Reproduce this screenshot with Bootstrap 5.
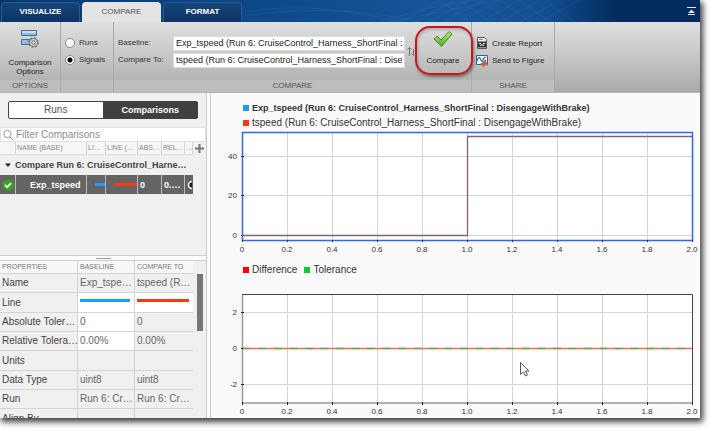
<!DOCTYPE html>
<html lang="en">
<head>
<meta charset="utf-8">
<meta name="viewport" content="width=device-width, initial-scale=1">
<title>Simulation Data Inspector</title>
<link rel="stylesheet" href="https://cdn.jsdelivr.net/npm/bootstrap@5.3.0/dist/css/bootstrap.min.css">
<style>
body{font-family:"Liberation Sans",Arial,sans-serif;font-size:9px;line-height:12px;color:#333;background:#fff;padding:0 15px 15px 0}
.app{background:#fafafa;box-shadow:2px 3px 6px 1px rgba(0,0,0,.75)}
.tabs{height:22px;background:linear-gradient(90deg,#06366e,#0d4888 35%,#165699 65%,#124f90 78%,#022c5e 88%,#022c5e);padding-left:1px}
.tabs .decor{position:absolute;inset:0;width:100%;height:100%}
.tabs .nav{gap:2px}
.tabs .nav-link{width:79px;height:20px;padding:0;font-size:8px;line-height:18px;text-align:center;color:#fff;font-weight:bold;border-radius:4px 4px 0 0;background:linear-gradient(#164478,#0d3566);border:1px solid #2a5a92;border-bottom:0}
.tabs .nav-link.active{color:#555;background:#e4e4e4;border-color:#e4e4e4;font-weight:normal}
.strip{height:71px;font-size:8px;background:linear-gradient(#dfdfdf,#c9c9c9 45%,#a9a9a9);border-bottom:1px solid #b4b4b4}
.group{border-right:1px solid #aaa}
.group-options{width:61px}
.group-mode{width:53px}
.group-compare{width:358px}
.group-share{width:83px}
.group-title{height:12px;line-height:12px;color:#555;text-align:center;background:#bdbdbd}
.strip .btn{font-size:8px;line-height:9px;color:#222;border:0;border-radius:0;padding:0}
.strip .btn:hover{background:#fff5}
.rows{padding:13px 4px 0;gap:1px}
.rows>div,.rows>.btn{height:16px}
.strip .form-check-input{width:10px;height:10px;margin:0;border:1px solid #888;background-color:#fff}
.strip .form-check-input:checked{background-image:radial-gradient(circle,#000 0 2px,#fff 3px)}
.row-label{width:55px}
.signal-box{height:15px;min-height:0;font-size:9px;line-height:12px;padding:0 2px;border:1px solid #ddd;border-radius:0;color:#222;background:#fff}
.swap-cell{width:10px}
.compare-btn{width:56px}
.callout{position:absolute;inset:4px -2px 5px 0;border:2px solid #c8161d;border-radius:15px;box-shadow:1px 2px 3px #0006,inset 1px 2px 3px #0003;pointer-events:none}
.side{width:206px;background:#f0f0f0}
.gutter{width:5px;background:#fbfbfb;border-left:1px solid #ccc;border-right:1px solid #ccc}
.seg{margin:8px 8px 8px}
.seg .btn{font-size:10px;line-height:14px;padding:0;height:18px;border-radius:2px;border:1px solid #444;background:#fff;color:#555}
.seg .btn.active{font-size:9px;background:#404040;border-color:#404040;color:#fff;font-weight:bold}
.search{height:15px;gap:2px;padding-left:2px;background:#fff;border:1px solid #e2e2e2}
.search input{height:13px;min-height:0;font-size:10px;line-height:13px;padding:0;border:0;background:none;border-radius:0}
.search input::placeholder{color:#8c8c8c}
.runs,.props{width:193px;table-layout:fixed;border-collapse:separate;border-spacing:0}
.runs th,.runs td,.props th,.props td{padding:0 0 0 2px;white-space:nowrap;vertical-align:middle}
.runs thead th{height:13px;padding-left:1px;font-size:7px;line-height:12px;font-weight:normal;color:#888;border-right:1px solid #d4d4d4;border-bottom:1px solid #ddd;background:#f6f6f6}
.runs .summary th{height:20px;padding-left:5px;color:#444}
.runs .picked td{height:19px;background:#646464;color:#fff;border-right:1px solid #bbb}
.runs .picked .sig-name{padding-left:14px;font-weight:bold}
.runs .picked .key-cell{padding:0 0 0 8px}
.runs .picked td:last-child{padding:0;border:0}
.add-col{width:13px;height:12px}
.line-key{height:3px}
.props .line-key{margin:0 4px 4px 0}
.blue{background:#1c9cff}.orange{background:#ff3812}.red{background:#f00}.green{background:#0c3}
.grip{height:6px;background:#fbfbfb;border-top:1px solid #ccc;border-bottom:1px solid #ccc}
.grip span{width:15px;height:1px;background:#999}
.detail{height:157px}
.props th,.props td{font-size:10px;border-right:1px solid #d4d4d4;border-bottom:1px solid #d4d4d4;font-weight:normal;height:19px;color:#666}
.props tbody th{color:#444}
.props thead th{height:13px;font-size:7px;line-height:12px;background:#f7f7f7;color:#777}
.props tr>:last-child{border-right:0}
.props tbody tr:nth-child(3n+2)>*{height:20px}
.props .editable{background:#fff}
.thumb{width:6px;height:57px;margin:13px 0 0 4px;background:#777}
.plots{padding-top:7px}
.legend-row{padding-left:32px;gap:3px;height:15px;font-size:10px}
.legend-row.fw-bold{font-size:9px}
.legend-pair{height:30px}
.legend-key{width:6px;height:6px}
.plot{display:block;width:100%;height:auto}
.plot text{font-size:8px;fill:#333}
</style>
<script src="https://cdn.jsdelivr.net/npm/bootstrap@5.3.0/dist/js/bootstrap.bundle.min.js"></script>
</head>
<body class="vh-100 overflow-hidden">
<div class="app d-flex flex-column h-100">
  <header class="tabs position-relative d-flex align-items-end justify-content-between flex-shrink-0">
    <svg class="decor" viewBox="0 0 700 22" preserveAspectRatio="none" fill="none" stroke="#5c9bd2" stroke-opacity=".22" stroke-width=".6"><path d="M380 22Q430 5 480 0M390 22Q450 10 500 0M400 22L440 0M415 22L455 0M430 22L470 0M445 22L485 0M460 22L500 0M480 22L520 0M500 22L540 0M520 22L560 0M540 22L580 0M440 0L470 22M460 0L490 22M480 0L510 22M500 0L530 22M520 0L550 22M545 0L575 22M245 12Q310 0 400 22M245 16Q330 2 420 22"/></svg>
    <nav class="nav position-relative flex-nowrap" aria-label="Toolstrip">
      <a class="nav-link" href="#">VISUALIZE</a>
      <a class="nav-link active" href="#" aria-current="page">COMPARE</a>
      <a class="nav-link" href="#">FORMAT</a>
    </nav>
    <button class="btn p-0 border-0 d-flex position-relative align-self-center me-1" aria-label="Minimize toolstrip"><svg width="10" height="10" viewBox="0 0 10 10"><path d="M1 1h9v1H1zM5.500 3.500L9 7H2zM2 8h7v1H2z" fill="#dde9f5"/></svg></button>
  </header>

  <div class="strip d-flex flex-shrink-0">
    <section class="group group-options d-flex flex-column">
      <button class="btn flex-fill d-flex flex-column align-items-center pt-2">
        <svg width="20" height="20" viewBox="0 0 20 20"><g fill="#8dbde6" stroke="#49718f"><path d="M1.500 .5h15v5h-15zM1.500 9.500h9v5h-9z"/></g><path d="M2 1h14v2H2z" fill="#c5def3"/><circle cx="13.500" cy="12.500" r="4.300" fill="none" stroke="#555" stroke-width="2" stroke-dasharray="1.700 1.680"/><circle cx="13.500" cy="12.500" r="4" fill="#d8d8d8" stroke="#666" stroke-width=".7"/><circle cx="13.500" cy="12.500" r="1.700" fill="#fff" stroke="#555"/></svg>
        <span class="mt-2">Comparison<br>Options</span>
      </button>
      <div class="group-title">OPTIONS</div>
    </section>
    <section class="group group-mode d-flex flex-column">
      <div class="rows flex-fill d-flex flex-column">
        <div class="d-flex align-items-center"><input class="form-check-input flex-shrink-0" type="radio" name="mode" id="m-runs"><label class="ps-1" for="m-runs">Runs</label></div>
        <div class="d-flex align-items-center"><input class="form-check-input flex-shrink-0" type="radio" name="mode" id="m-signals" checked><label class="ps-1" for="m-signals">Signals</label></div>
      </div>
      <div class="group-title"></div>
    </section>
    <section class="group group-compare d-flex flex-column">
      <div class="flex-fill d-flex">
        <div class="rows pe-0 flex-fill d-flex flex-column">
          <div class="d-flex align-items-center"><label class="row-label flex-shrink-0" for="s-base">Baseline:</label><input class="signal-box form-control" id="s-base" value="Exp_tspeed (Run 6: CruiseControl_Harness_ShortFinal : DisengageWithBrake)"></div>
          <div class="d-flex align-items-center"><label class="row-label flex-shrink-0" for="s-to">Compare To:</label><input class="signal-box form-control" id="s-to" value="tspeed (Run 6: CruiseControl_Harness_ShortFinal : DisengageWithBrake)"></div>
        </div>
        <button class="btn swap-cell d-flex align-items-center justify-content-end" aria-label="Swap signals"><svg width="8" height="11" viewBox="0 0 8 11" fill="none" stroke="#777"><path d="M2.500 10V1.500M.5 3.500l2-2 2 2M6.500 3v6.500M4.500 7.500l2 2"/></svg></button>
        <button class="btn compare-btn position-relative d-flex flex-column align-items-center flex-shrink-0">
          <span class="callout"></span>
          <svg class="mt-2 mb-2" width="22" height="18" viewBox="0 0 22 18"><defs><linearGradient id="tick" x2="0" y2="1"><stop stop-color="#b6ef72"/><stop offset="1" stop-color="#4aa81e"/></linearGradient></defs><path d="M2 9l3-3 4 4 8-8.500 3 2.500L9.500 16.500z" fill="url(#tick)" stroke="#4c8a2c" stroke-linejoin="round"/></svg>
          <span>Compare</span>
        </button>
      </div>
      <div class="group-title">COMPARE</div>
    </section>
    <section class="group group-share d-flex flex-column">
      <div class="rows flex-fill d-flex flex-column align-items-start">
        <button class="btn d-flex align-items-center gap-1"><svg width="12" height="14" viewBox="0 0 12 14"><path d="M1.500 1.500h7l2 2v9h-9z" fill="#eee" stroke="#555"/><path d="M3 3.500h4" stroke="#888"/><path d="M2 5.500h8v6H2z" fill="#333"/><path d="M3 7.500h2m2 0h2M4 9.500q2-1.500 4 0" stroke="#fff" fill="none"/></svg>Create Report</button>
        <button class="btn d-flex align-items-center gap-1"><svg width="12" height="13" viewBox="0 0 12 13"><path d="M.5 1.500h11v9H.5z" fill="#fff" stroke="#2f5f94"/><path d="M1 7Q3 1 4.500 5T7 6t3-3" fill="none" stroke="#2869a8" stroke-width="1.200"/><path d="M4.500 9.500l2-1L9.500 5l2.500 7-2-1-2.500 2z" fill="#dc5a28"/><path d="M4.500 9.500l2-1 1-1 .5 3z" fill="#4b8fc4"/></svg>Send to Figure</button>
      </div>
      <div class="group-title">SHARE</div>
    </section>
  </div>

  <main class="d-flex flex-fill overflow-hidden">
    <aside class="side d-flex flex-column flex-shrink-0">
      <div class="seg btn-group" role="group" aria-label="View">
        <button class="btn w-50">Runs</button>
        <button class="btn w-50 active">Comparisons</button>
      </div>
      <div class="search d-flex align-items-center">
        <svg class="flex-shrink-0" width="11" height="12" viewBox="0 0 11 12" fill="none" stroke="#999"><circle cx="4.500" cy="5" r="3.700"/><path d="M7 8l3.500 3.500"/></svg>
        <input class="form-control" type="search" placeholder="Filter Comparisons" aria-label="Filter Comparisons">
      </div>
      <div class="d-flex flex-fill align-items-start">
        <table class="runs">
          <colgroup><col width="16"><col width="71"><col width="19"><col width="32"><col width="24"><col width="23"><col width="8"></colgroup>
          <thead><tr><th></th><th>NAME (BASE)</th><th>LI…</th><th>LINE (…</th><th>ABS…</th><th>REL…</th><th>…</th></tr></thead>
          <tbody>
            <tr class="summary"><th colspan="7"><svg class="me-1" width="6" height="5" viewBox="0 0 6 5"><path d="M0 .5h6L3 4z" fill="#222"/></svg>Compare Run 6: CruiseControl_Harne…</th></tr>
            <tr class="picked"><td><svg class="d-block" width="12" height="12" viewBox="0 0 12 12"><circle cx="6" cy="6" r="5.700" fill="#37a31c"/><path d="M3 6l2.200 2.200L9 4" fill="none" stroke="#fff" stroke-width="1.800"/></svg></td><td class="sig-name">Exp_tspeed</td><td class="key-cell"><div class="line-key blue"></div></td><td class="key-cell"><div class="line-key orange"></div></td><td><b>0</b></td><td><b>0.…</b></td><td><svg class="d-block" width="7" height="10" viewBox="0 0 7 10"><circle cx="7" cy="5" r="3.500" fill="#222" stroke="#fff" stroke-width="1.500"/></svg></td></tr>
          </tbody>
        </table>
        <button class="btn p-0 border-0 add-col d-flex align-items-center justify-content-center" aria-label="Add column"><svg width="9" height="9" viewBox="0 0 9 9"><path d="M4.500 0v9M0 4.500h9" stroke="#777" stroke-width="2"/></svg></button>
      </div>
      <div class="grip d-flex align-items-center justify-content-center flex-shrink-0"><span></span></div>
      <div class="detail d-flex align-items-start overflow-hidden flex-shrink-0">
        <table class="props">
          <colgroup><col width="78"><col width="57"><col width="58"></colgroup>
          <thead><tr><th>PROPERTIES</th><th>BASELINE</th><th>COMPARE TO</th></tr></thead>
          <tbody>
            <tr><th>Name</th><td>Exp_tspe…</td><td>tspeed (R…</td></tr>
            <tr><th>Line</th><td class="editable"><div class="line-key blue"></div></td><td class="editable"><div class="line-key orange"></div></td></tr>
            <tr><th>Absolute Toler…</th><td class="editable">0</td><td>0</td></tr>
            <tr><th>Relative Tolera…</th><td class="editable">0.00%</td><td>0.00%</td></tr>
            <tr><th>Units</th><td></td><td></td></tr>
            <tr><th>Data Type</th><td>uint8</td><td>uint8</td></tr>
            <tr><th>Run</th><td>Run 6: Cr…</td><td>Run 6: Cr…</td></tr>
            <tr><th>Align By</th><td></td><td></td></tr>
          </tbody>
        </table>
        <div class="thumb"></div>
      </div>
    </aside>
    <div class="gutter flex-shrink-0"></div>
    <section class="plots flex-fill">
      <div class="legend-row d-flex align-items-center fw-bold"><span class="legend-key blue"></span>Exp_tspeed (Run 6: CruiseControl_Harness_ShortFinal : DisengageWithBrake)</div>
      <div class="legend-row d-flex align-items-center"><span class="legend-key orange"></span>tspeed (Run 6: CruiseControl_Harness_ShortFinal : DisengageWithBrake)</div>
      <svg class="plot" viewBox="0 0 489 125">
        <path d="M31 3h450v107H31z" fill="#fff"/>
        <path d="M31 26.500h450M31 65.500h450M31 105.500h450M76.500 3v107M121.500 3v107M166.500 3v107M211.500 3v107M256.500 3v107M301.500 3v107M346.500 3v107M391.500 3v107M436.500 3v107" stroke="#d4d4d4"/>
        <path d="M31.500 2.500h450v108h-450z" fill="none" stroke="#3566ee" stroke-width="1.500"/>
        <path d="M30 26.500h3M30 65.500h3M30 105.500h3M31.500 110v2M76.500 110v2M121.500 110v2M166.500 110v2M211.500 110v2M256.500 110v2M301.500 110v2M346.500 110v2M391.500 110v2M436.500 110v2M481.500 110v2" stroke="#333"/>
        <path d="M31 105.500h225.500v-99H481" fill="none" stroke="#86607f" stroke-width="1.300"/>
        <g text-anchor="end"><text x="26" y="29">40</text><text x="26" y="68">20</text><text x="26" y="108">0</text></g>
        <g text-anchor="middle"><text x="31" y="122">0</text><text x="76" y="122">0.2</text><text x="121" y="122">0.4</text><text x="166" y="122">0.6</text><text x="211" y="122">0.8</text><text x="256" y="122">1.0</text><text x="301" y="122">1.2</text><text x="346" y="122">1.4</text><text x="391" y="122">1.6</text><text x="436" y="122">1.8</text><text x="481" y="122">2.0</text></g>
      </svg>
      <div class="legend-row legend-pair d-flex align-items-center"><span class="legend-key red"></span>Difference<span class="legend-key green ms-1"></span>Tolerance</div>
      <svg class="plot" viewBox="0 0 489 133">
        <path d="M31 9h450v108H31z" fill="#fff"/>
        <path d="M31 27.500h450M31 63.500h450M31 99.500h450M76.500 9v108M121.500 9v108M166.500 9v108M211.500 9v108M256.500 9v108M301.500 9v108M346.500 9v108M391.500 9v108M436.500 9v108" stroke="#d4d4d4"/>
        <path d="M31.500 9v109H482" fill="none" stroke="#999" stroke-width="1.500"/>
        <path d="M31 9.500h450.500V118" fill="none" stroke="#444"/>
        <path d="M30 27.500h3M30 63.500h3M30 99.500h3M31.500 117v3M76.500 117v3M121.500 117v3M166.500 117v3M211.500 117v3M256.500 117v3M301.500 117v3M346.500 117v3M391.500 117v3M436.500 117v3M481.500 117v3" stroke="#222"/>
        <path d="M32 63.500h449" stroke="#f06c6c" stroke-width="1.300"/><path d="M32 63.500h449" stroke="#70a34c" stroke-width="1.300" stroke-dasharray="8 7.500"/>
        <g text-anchor="end"><text x="26" y="30">2</text><text x="26" y="66">0</text><text x="26" y="102">-2</text></g>
        <g text-anchor="middle"><text x="31" y="129">0</text><text x="76" y="129">0.2</text><text x="121" y="129">0.4</text><text x="166" y="129">0.6</text><text x="211" y="129">0.8</text><text x="256" y="129">1.0</text><text x="301" y="129">1.2</text><text x="346" y="129">1.4</text><text x="391" y="129">1.6</text><text x="436" y="129">1.8</text><text x="481" y="129">2.0</text></g>
        <path d="M309.500 77.500v12l3-2.500 2 4 2-1-2-4h3.500z" fill="#fff" stroke="#55556a"/>
      </svg>
    </section>
  </main>
</div>
</body>
</html>
